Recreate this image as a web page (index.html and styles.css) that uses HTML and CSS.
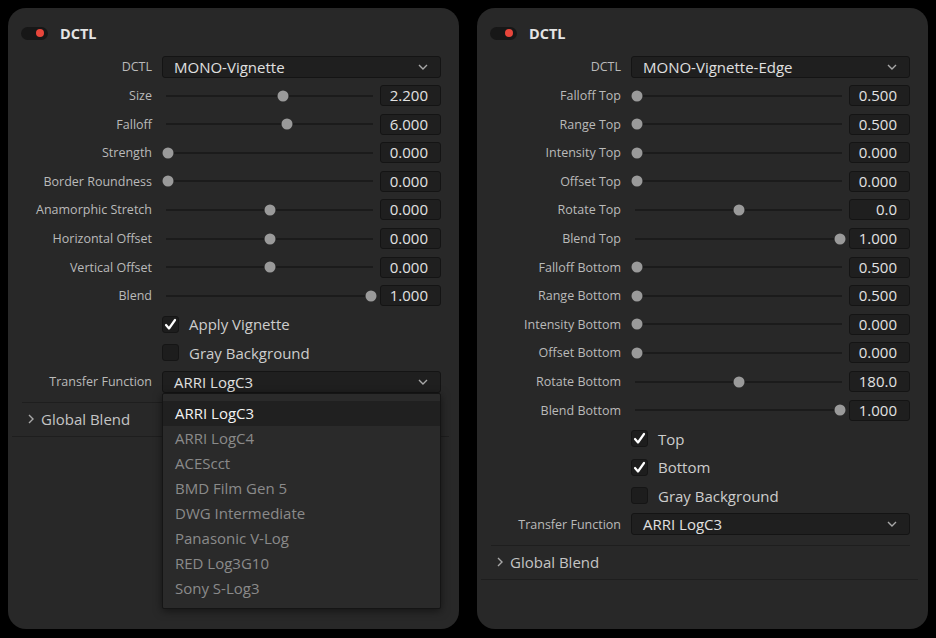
FILE: index.html
```html
<!DOCTYPE html>
<html lang="en">
<head>
    <meta charset="UTF-8">
    <title>DCTL Panels</title>
    <link rel="stylesheet" href="styles.css">
</head>
<body>
    <div class="panels">
        <!-- MONO-Vignette -->
        <div class="panel">
            <div class="panel-head">
                <span class="toggle"><span class="dot"></span></span>
                <span class="title">DCTL</span>
            </div>

            <div class="row">
                <span class="lbl">DCTL</span>
                <div class="select"><span>MONO-Vignette</span><svg class="chev" width="10" height="6" viewBox="0 0 10 6"><polyline points="1,1 5,5 9,1"/></svg></div>
            </div>
            <div class="row">
                <span class="lbl">Size</span>
                <div class="ctl"><div class="slider"><span class="thumb" style="--p:0.567"></span></div><div class="num">2.200</div></div>
            </div>
            <div class="row">
                <span class="lbl">Falloff</span>
                <div class="ctl"><div class="slider"><span class="thumb" style="--p:0.586"></span></div><div class="num">6.000</div></div>
            </div>
            <div class="row">
                <span class="lbl">Strength</span>
                <div class="ctl"><div class="slider"><span class="thumb" style="--p:0"></span></div><div class="num">0.000</div></div>
            </div>
            <div class="row">
                <span class="lbl">Border Roundness</span>
                <div class="ctl"><div class="slider"><span class="thumb" style="--p:0"></span></div><div class="num">0.000</div></div>
            </div>
            <div class="row">
                <span class="lbl">Anamorphic Stretch</span>
                <div class="ctl"><div class="slider"><span class="thumb" style="--p:0.5"></span></div><div class="num">0.000</div></div>
            </div>
            <div class="row">
                <span class="lbl">Horizontal Offset</span>
                <div class="ctl"><div class="slider"><span class="thumb" style="--p:0.5"></span></div><div class="num">0.000</div></div>
            </div>
            <div class="row">
                <span class="lbl">Vertical Offset</span>
                <div class="ctl"><div class="slider"><span class="thumb" style="--p:0.5"></span></div><div class="num">0.000</div></div>
            </div>
            <div class="row">
                <span class="lbl">Blend</span>
                <div class="ctl"><div class="slider"><span class="thumb" style="--p:1"></span></div><div class="num">1.000</div></div>
            </div>
            <div class="row">
                <span class="lbl"></span>
                <div class="check"><span class="box"><svg width="17" height="17" viewBox="0 0 17 17"><polyline points="4,9 7,12.5 13,4"/></svg></span>Apply Vignette</div>
            </div>
            <div class="row">
                <span class="lbl"></span>
                <div class="check"><span class="box"></span>Gray Background</div>
            </div>
            <div class="row">
                <span class="lbl">Transfer Function</span>
                <div class="select open"><span>ARRI LogC3</span><svg class="chev" width="10" height="6" viewBox="0 0 10 6"><polyline points="1,1 5,5 9,1"/></svg>
                    <ul class="menu">
                        <li class="active">ARRI LogC3</li>
                        <li>ARRI LogC4</li>
                        <li>ACEScct</li>
                        <li>BMD Film Gen 5</li>
                        <li>DWG Intermediate</li>
                        <li>Panasonic V-Log</li>
                        <li>RED Log3G10</li>
                        <li>Sony S-Log3</li>
                    </ul>
                </div>
            </div>

            <div class="group">
                <svg class="arrow" width="6" height="10" viewBox="0 0 6 10"><polyline points="1,1 5,5 1,9"/></svg>
                Global Blend
            </div>
            <div class="sep"></div>
        </div>

        <!-- MONO-Vignette-Edge -->
        <div class="panel">
            <div class="panel-head">
                <span class="toggle"><span class="dot"></span></span>
                <span class="title">DCTL</span>
            </div>

            <div class="row">
                <span class="lbl">DCTL</span>
                <div class="select"><span>MONO-Vignette-Edge</span><svg class="chev" width="10" height="6" viewBox="0 0 10 6"><polyline points="1,1 5,5 9,1"/></svg></div>
            </div>
            <div class="row">
                <span class="lbl">Falloff Top</span>
                <div class="ctl"><div class="slider"><span class="thumb" style="--p:0"></span></div><div class="num">0.500</div></div>
            </div>
            <div class="row">
                <span class="lbl">Range Top</span>
                <div class="ctl"><div class="slider"><span class="thumb" style="--p:0"></span></div><div class="num">0.500</div></div>
            </div>
            <div class="row">
                <span class="lbl">Intensity Top</span>
                <div class="ctl"><div class="slider"><span class="thumb" style="--p:0"></span></div><div class="num">0.000</div></div>
            </div>
            <div class="row">
                <span class="lbl">Offset Top</span>
                <div class="ctl"><div class="slider"><span class="thumb" style="--p:0"></span></div><div class="num">0.000</div></div>
            </div>
            <div class="row">
                <span class="lbl">Rotate Top</span>
                <div class="ctl"><div class="slider"><span class="thumb" style="--p:0.5"></span></div><div class="num">0.0</div></div>
            </div>
            <div class="row">
                <span class="lbl">Blend Top</span>
                <div class="ctl"><div class="slider"><span class="thumb" style="--p:1"></span></div><div class="num">1.000</div></div>
            </div>
            <div class="row">
                <span class="lbl">Falloff Bottom</span>
                <div class="ctl"><div class="slider"><span class="thumb" style="--p:0"></span></div><div class="num">0.500</div></div>
            </div>
            <div class="row">
                <span class="lbl">Range Bottom</span>
                <div class="ctl"><div class="slider"><span class="thumb" style="--p:0"></span></div><div class="num">0.500</div></div>
            </div>
            <div class="row">
                <span class="lbl">Intensity Bottom</span>
                <div class="ctl"><div class="slider"><span class="thumb" style="--p:0"></span></div><div class="num">0.000</div></div>
            </div>
            <div class="row">
                <span class="lbl">Offset Bottom</span>
                <div class="ctl"><div class="slider"><span class="thumb" style="--p:0"></span></div><div class="num">0.000</div></div>
            </div>
            <div class="row">
                <span class="lbl">Rotate Bottom</span>
                <div class="ctl"><div class="slider"><span class="thumb" style="--p:0.5"></span></div><div class="num">180.0</div></div>
            </div>
            <div class="row">
                <span class="lbl">Blend Bottom</span>
                <div class="ctl"><div class="slider"><span class="thumb" style="--p:1"></span></div><div class="num">1.000</div></div>
            </div>
            <div class="row">
                <span class="lbl"></span>
                <div class="check"><span class="box"><svg width="17" height="17" viewBox="0 0 17 17"><polyline points="4,9 7,12.5 13,4"/></svg></span>Top</div>
            </div>
            <div class="row">
                <span class="lbl"></span>
                <div class="check"><span class="box"><svg width="17" height="17" viewBox="0 0 17 17"><polyline points="4,9 7,12.5 13,4"/></svg></span>Bottom</div>
            </div>
            <div class="row">
                <span class="lbl"></span>
                <div class="check"><span class="box"></span>Gray Background</div>
            </div>
            <div class="row">
                <span class="lbl">Transfer Function</span>
                <div class="select"><span>ARRI LogC3</span><svg class="chev" width="10" height="6" viewBox="0 0 10 6"><polyline points="1,1 5,5 9,1"/></svg></div>
            </div>

            <div class="group">
                <svg class="arrow" width="6" height="10" viewBox="0 0 6 10"><polyline points="1,1 5,5 1,9"/></svg>
                Global Blend
            </div>
            <div class="sep"></div>
        </div>
    </div>
</body>
</html>
```

FILE: styles.css
```css
body {
    margin: 0;
    padding: 8px;
    background: #000;
    font-family: 'Open Sans', 'Noto Sans', sans-serif;
    color: #d0d0d0;
}

.panels {
    display: flex;
    gap: 18px;
}

.panel {
    width: 451px;
    height: 621px;
    box-sizing: border-box;
    padding: 13px 18px 0 0;
    background: #282828;
    border-radius: 18px;
}

.panel-head {
    height: 24px;
    margin: 0 0 7.7px 13px;
    display: flex;
    align-items: center;
}

.toggle {
    position: relative;
    width: 27px;
    height: 13px;
    border-radius: 7px;
    background: #171717;
}

.toggle .dot {
    position: absolute;
    right: 4px;
    top: 2.5px;
    width: 8px;
    height: 8px;
    border-radius: 50%;
    background: #e8463b;
}

.title {
    margin-left: 12px;
    font-size: 14.5px;
    font-weight: 700;
    color: #e4e4e4;
}

.row {
    display: grid;
    grid-template-columns: 144px 1fr;
    column-gap: 10px;
    align-items: center;
    height: 28.6px;
}

.lbl {
    text-align: right;
    font-size: 12.5px;
    color: #bababa;
    white-space: nowrap;
}

.ctl {
    display: flex;
    align-items: center;
}

.slider {
    position: relative;
    flex: 1;
    height: 2px;
    margin: 0 7px 0 4px;
    background: #1b1b1b;
}

.thumb {
    position: absolute;
    top: 50%;
    left: calc(2px + var(--p) * (100% - 4px));
    width: 11px;
    height: 11px;
    border-radius: 50%;
    background: #9a9a9a;
    transform: translate(-50%, -50%);
}

.num {
    width: 61px;
    height: 21px;
    box-sizing: border-box;
    padding-right: 12px;
    border: 1px solid #141414;
    border-radius: 3px;
    background: #1f1f1f;
    text-align: right;
    font-size: 15px;
    line-height: 19px;
    color: #e2e2e2;
}

.select {
    position: relative;
    height: 22px;
    box-sizing: border-box;
    padding: 0 12px 0 11px;
    border: 1px solid #141414;
    border-radius: 3px;
    background: #1f1f1f;
    display: flex;
    align-items: center;
    justify-content: space-between;
    font-size: 15px;
    color: #e0e0e0;
}

.chev polyline,
.arrow polyline {
    fill: none;
    stroke: #a8a8a8;
    stroke-width: 1.4;
}

.check {
    display: flex;
    align-items: center;
    font-size: 15px;
    color: #cdcdcd;
}

.box {
    width: 17px;
    height: 17px;
    box-sizing: border-box;
    margin-right: 10px;
    border: 1px solid #151515;
    border-radius: 3px;
    background: #1d1d1d;
}

.box svg {
    display: block;
    margin: -1px;
}

.box polyline {
    fill: none;
    stroke: #fff;
    stroke-width: 2.2;
    stroke-linecap: round;
    stroke-linejoin: round;
}

.menu {
    position: absolute;
    top: calc(100% + 1px);
    left: -1px;
    right: -1px;
    margin: 0;
    padding: 7px 0;
    list-style: none;
    background: #2a2a2a;
    border: 1px solid #151515;
    border-radius: 2px;
    box-shadow: 0 2px 8px rgba(0, 0, 0, 0.5);
    z-index: 5;
}

.menu li {
    height: 25px;
    line-height: 24px;
    padding-left: 12px;
    color: #8a8a8a;
}

.menu li.active {
    background: #202020;
    color: #f2f2f2;
}

.group {
    display: flex;
    align-items: center;
    height: 33px;
    margin: 6px 0 0 14px;
    padding-left: 6px;
    border-top: 1px solid #1e1e1e;
    font-size: 15px;
    color: #c4c4c4;
}

.arrow {
    margin-right: 7px;
}

.sep {
    height: 1px;
    margin: 0 -8px 0 4px;
    background: #1e1e1e;
}
```
